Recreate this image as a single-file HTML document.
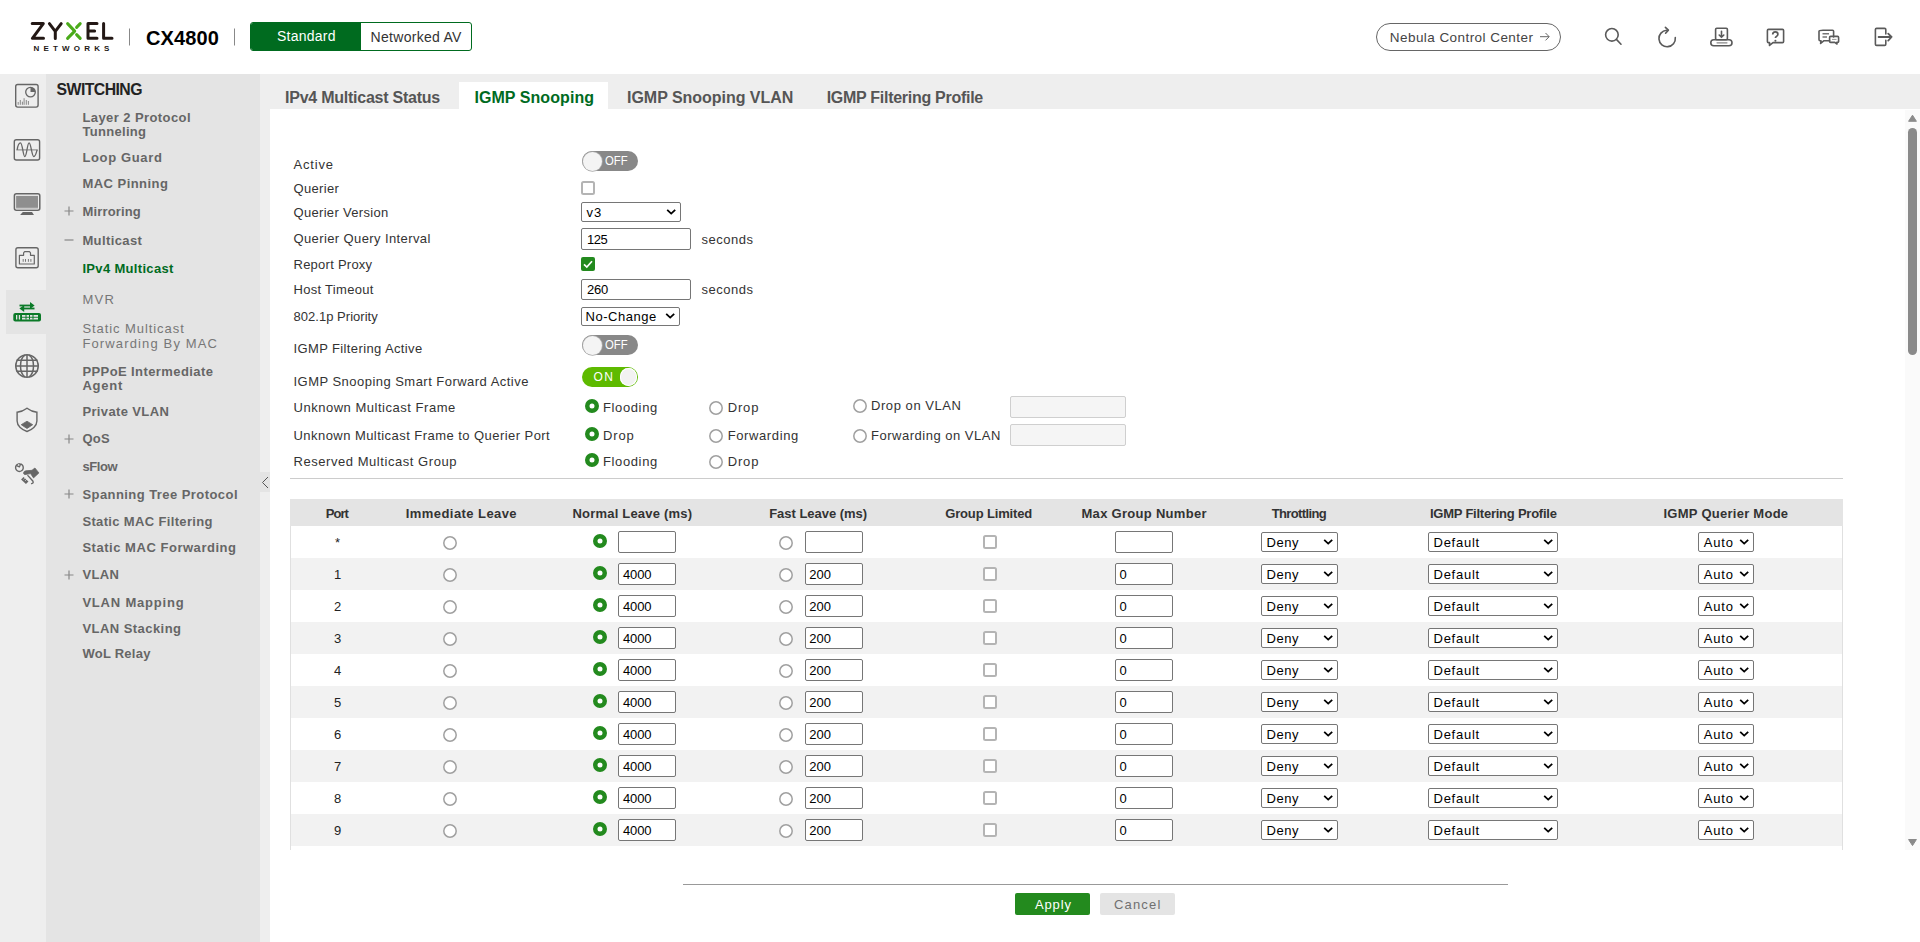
<!DOCTYPE html>
<html><head><meta charset="utf-8"><title>IGMP Snooping</title>
<style>
html,body{margin:0;padding:0}
body{width:1920px;height:942px;overflow:hidden;position:relative;background:#fff;font-family:"Liberation Sans", sans-serif}
.t{position:absolute;white-space:nowrap;line-height:1}
</style></head><body>
<div style="position:absolute;left:0px;top:74px;width:46px;height:868px;background:#eeeeee"></div>
<div style="position:absolute;left:46px;top:74px;width:214px;height:868px;background:#e4e4e4"></div>
<div style="position:absolute;left:260px;top:74px;width:1660px;height:868px;background:#eeeeee"></div>
<div style="position:absolute;left:270px;top:109px;width:1650px;height:833px;background:#ffffff"></div>
<div style="position:absolute;left:6px;top:290px;width:40px;height:44px;background:#e4e4e4"></div>
<div style="position:absolute;left:260px;top:472px;width:10px;height:20px;background:#e4e4e4"></div>
<svg style="position:absolute;left:260px;top:472px" width="10" height="20"><path d="M8 5 L2.5 10.5 L8 16" fill="none" stroke="#555" stroke-width="1"/></svg>
<svg style="position:absolute;left:0;top:0" width="240" height="60">
<g fill="none" stroke="#231815" stroke-width="3" stroke-linecap="round" stroke-linejoin="round">
<path d="M32.2 23.6 H43.3 L32.4 38.3 H43.5"/>
<path d="M49.4 23.6 L55.3 31.4 L61.2 23.6 M55.3 31.4 V38.4"/>
<path d="M88 23.6 H97 M88 31.1 H94.6 M88 38.3 H97 M88 23.6 V38.3"/>
<path d="M103.6 23.6 V38.3 H112"/>
</g>
<g fill="none" stroke="#4aab1a" stroke-width="3" stroke-linecap="round" stroke-linejoin="round">
<path d="M67.6 23.6 L74.7 31.1 L67.6 38.4"/>
<path d="M80.2 23.6 L76.6 27.4 M76.6 34.6 L80.2 38.4"/>
</g>
<line x1="129.5" y1="28.5" x2="129.5" y2="45.5" stroke="#888" stroke-width="1"/>
<line x1="234.5" y1="28.5" x2="234.5" y2="45.5" stroke="#888" stroke-width="1"/>
</svg>
<div class="t" style="left:33.6px;top:44.93px;font-size:8px;color:#231815;font-weight:700;letter-spacing:4.17px;">NETWORKS</div>
<div class="t" style="left:146px;top:28.07px;font-size:20px;color:#000;font-weight:700;letter-spacing:0.13px;">CX4800</div>
<div style="position:absolute;left:250px;top:22px;width:220px;height:27px;border:1px solid #006b1f;border-radius:3px;background:#fff;overflow:hidden"><div style="position:absolute;left:0;top:0;width:110px;height:27px;background:#006b1f"></div></div>
<div class="t" style="left:277px;top:29.15px;font-size:14px;color:#fff;letter-spacing:0.24px;">Standard</div>
<div class="t" style="left:370.6px;top:29.65px;font-size:14px;color:#333;letter-spacing:0.29px;">Networked AV</div>
<div style="position:absolute;left:1376px;top:23px;width:183px;height:26px;border:1px solid #666;border-radius:14px"></div>
<div class="t" style="left:1389.8px;top:30.57px;font-size:13.5px;color:#444;letter-spacing:0.44px;">Nebula Control Center</div>
<svg style="position:absolute;left:1536px;top:28px" width="16" height="16"><path d="M4 8.7 H13 M9.5 5 L13.2 8.7 L9.5 12.4" fill="none" stroke="#666" stroke-width="1"/></svg>
<svg style="position:absolute;left:1590px;top:15px" width="320" height="40">
<g fill="none" stroke="#5a5a5a" stroke-width="1.6" stroke-linecap="round" stroke-linejoin="round">
<circle cx="21.9" cy="19.8" r="6.3"/>
<path d="M26.4 24.4 L31 29.2"/>
<path d="M85.3 22.6 A8.2 8.2 0 1 1 76.6 15.3"/>
<path d="M75.4 12.4 L78.4 15.1 L75.6 18.2"/>
<rect x="125.6" y="13.3" width="11.8" height="11.5" rx="1.2"/>
<path d="M131.5 16.3 V22.2 M129.2 20 L131.5 22.3 L133.8 20"/>
<rect x="120.8" y="24.8" width="21.2" height="6" rx="3"/>
<path d="M127 27.8 H137" stroke-width="1.2" stroke="#888"/>
<path d="M178.5 14.4 H192.5 Q193.6 14.4 193.6 15.5 V26.5 Q193.6 27.6 192.5 27.6 H183 L179.5 30.4 V27.6 H178.5 Q177.4 27.6 177.4 26.5 V15.5 Q177.4 14.4 178.5 14.4 Z"/>
<path d="M233 15.2 H242.6 Q243.6 15.2 243.6 16.2 V22 M233 15.2 Q229 15.2 229 16.3 V24.6 Q229 25.7 230 25.7 H231 L230.6 28.5 L234 25.7 H239.6"/>
<path d="M240.6 21.4 H247.6 Q248.6 21.4 248.6 22.4 V26.4 Q248.6 27.4 247.6 27.4 H246.8 L247 29 L244.8 27.4 H240.6 Q239.6 27.4 239.6 26.4 V22.4 Q239.6 21.4 240.6 21.4 Z"/>
<path d="M295.8 19 V14.6 Q295.8 13.4 294.6 13.4 H286.6 Q285.4 13.4 285.4 14.6 V29.2 Q285.4 30.4 286.6 30.4 H294.6 Q295.8 30.4 295.8 29.2 V25.2"/>
<path d="M288.6 22 H301.4 M298.2 18.6 L301.6 22 L298.2 25.6" stroke-width="1.8"/>
</g>
<path d="M182.7 19.6 C182.7 17.8 184 16.9 185.3 16.9 C186.8 16.9 187.9 17.9 187.9 19.3 C187.9 21.2 185.4 21.4 185.4 22.9" fill="none" stroke="#5a5a5a" stroke-width="1.7"/><circle cx="185.4" cy="25.7" r="1.05" fill="#5a5a5a"/>
<path d="M232.5 18.8 H239 M232.5 22 H237" stroke="#777" stroke-width="1.4"/>
<path d="M242 24.4 H246.5" stroke="#999" stroke-width="1"/>
</svg>
<svg style="position:absolute;left:0;top:74px" width="46" height="220">
<g fill="none" stroke="#666" stroke-width="1.4" stroke-linejoin="round">
<rect x="15.7" y="10.5" width="22.4" height="22.6" rx="2"/>
<circle cx="30.5" cy="18.1" r="4.8" stroke-width="1.3"/>
<rect x="14.3" y="65.8" width="25.3" height="20.2" rx="2"/>
<rect x="14.4" y="119.8" width="25.4" height="16.5" rx="2" stroke-width="1.5"/>
<rect x="15.9" y="173.8" width="22.3" height="19.9" rx="2"/>
<path d="M19.4 190 V181.3 H23.6 V178.9 L24.6 177.7 H29.5 L30.5 178.9 V181.3 H34.3 V190 Z" stroke-width="1.2"/>
</g>
<path d="M30.5 13.3 A4.8 4.8 0 0 1 35.3 18.1 H30.5 Z" fill="#666"/>
<g stroke="#888" stroke-width="1">
<path d="M18.2 30.8 V28 M20.3 30.8 V26 M22.4 30.8 V27.7 M24.1 30.8 V24.2 M26.3 30.8 V26 M28.4 30.8 V27"/>
</g>
<path d="M16.3 75.9 H37.8" stroke="#888" stroke-width="1.1"/>
<path d="M17.2 75.9 C17.8 71 19 68.8 20.5 68.8 C22.5 68.8 23 82.6 24.8 82.6 C26.8 82.6 27.2 68.8 29.1 68.8 C31 68.8 31.8 82.6 33.8 82.6 C35.6 82.6 36.5 78 37.1 75.9" fill="none" stroke="#666" stroke-width="1.3"/>
<rect x="16.1" y="121.9" width="21.9" height="12" fill="#8e8e8e"/>
<rect x="16.1" y="133.9" width="21.9" height="1.6" fill="#c8c8c8"/>
<path d="M22.8 138 H32 L34 140.9 H20.1 Z" fill="#666"/>
<path d="M23.2 185 V187.8 M25.5 185 V187.8 M28.4 185 V187.8 M30.9 185 V187.8" stroke="#777" stroke-width="1"/>
</svg>
<svg style="position:absolute;left:0;top:290px" width="46" height="44">
<g fill="#0b7a28">
<rect x="19.5" y="14.6" width="11" height="1.8"/>
<path d="M30 11.9 L34.6 15.5 L30 19.1 Z"/>
<rect x="24" y="17.6" width="10.5" height="1.8"/>
<path d="M24.2 15 L19.4 18.5 L24.2 22 Z"/>
<rect x="13.3" y="23" width="27.7" height="8.4" rx="2"/>
</g>
<g fill="#e4e4e4">
<rect x="16" y="25" width="1.3" height="4.5"/>
<rect x="18.8" y="25" width="1.3" height="4.5"/>
<rect x="22" y="25" width="16" height="4.5"/>
</g>
<g fill="#0b7a28">
<rect x="25.5" y="25" width="1" height="4.5"/><rect x="29" y="25" width="1" height="4.5"/><rect x="32.5" y="25" width="1" height="4.5"/>
<rect x="22" y="26.8" width="16" height="0.9"/>
</g>
</svg>
<svg style="position:absolute;left:0;top:340px" width="46" height="160">
<g fill="none" stroke="#666" stroke-width="1.5">
<circle cx="27" cy="26" r="11.25"/>
<path d="M16.5 20.2 H37.5 M15.8 25.9 H38.2 M16.5 31.2 H37.5 M27 15 V37"/>
<path d="M25 15.2 C19 19 19 33 25 36.8 M29 15.2 C35 19 35 33 29 36.8"/>
<path d="M27 68.2 C30 70.5 33.5 71.8 36.9 72.2 V81 C36.9 86 32 90 27 91.5 C22 90 17.1 86 17.1 81 V72.2 C20.5 71.8 24 70.5 27 68.2 Z" stroke-width="1.4"/>
</g>
<path d="M21.2 84.7 L27 81.2 L32.7 84.7 L27 88.5 Z" fill="#666" stroke="#666" stroke-width="0.8" stroke-linejoin="round"/>
<g fill="#666" stroke="#666" stroke-linejoin="round" stroke-width="0.8">
<path d="M23.6 132.6 Q24 131 26 130.8 L32 130.3 L34.9 128 L38.9 132.9 L33.5 137.9 L30.6 133.6 L25 134.6 Q23.4 134.4 23.6 132.6 Z"/>
</g>
<path d="M22.3 138.2 L27.2 142.8" stroke="#666" stroke-width="3.6"/>
<path d="M23.5 139.6 L25.5 137.6 M25 141 L27 139" stroke="#eee" stroke-width="0.6"/>
<g fill="none" stroke="#666" stroke-width="1.4" stroke-linecap="round">
<path d="M17.4 124.3 A3.85 3.85 0 1 0 22.6 125.4"/><path d="M16.6 125.6 L19.4 126.9 L20.4 124.4 L18.8 123.6" stroke-width="1.3" stroke-linejoin="round"/><path d="M21 123.9 L22.5 125.3" stroke-width="1.3"/>
<path d="M27.9 135.6 L32.8 141 Q34 143.3 31.6 143.6"/>
</g>
</svg>
<div class="t" style="left:56.6px;top:81.63px;font-size:15.8px;color:#222;font-weight:700;letter-spacing:-0.56px;">SWITCHING</div>
<div class="t" style="left:82.4px;top:111px;font-size:13px;color:#666;font-weight:700;letter-spacing:0.42px;">Layer 2 Protocol</div>
<div class="t" style="left:82.4px;top:125px;font-size:13px;color:#666;font-weight:700;letter-spacing:0.31px;">Tunneling</div>
<div class="t" style="left:82.4px;top:151px;font-size:13px;color:#666;font-weight:700;letter-spacing:0.65px;">Loop Guard</div>
<div class="t" style="left:82.4px;top:177px;font-size:13px;color:#666;font-weight:700;letter-spacing:0.47px;">MAC Pinning</div>
<div class="t" style="left:82.4px;top:205.2px;font-size:13px;color:#666;font-weight:700;letter-spacing:0.17px;">Mirroring</div>
<div class="t" style="left:82.4px;top:233.7px;font-size:13px;color:#666;font-weight:700;letter-spacing:0.4px;">Multicast</div>
<div class="t" style="left:82.4px;top:262.4px;font-size:13px;color:#006b1f;font-weight:700;letter-spacing:0.33px;">IPv4 Multicast</div>
<div class="t" style="left:82.4px;top:292.7px;font-size:13px;color:#777;letter-spacing:1.35px;">MVR</div>
<div class="t" style="left:82.4px;top:322.4px;font-size:13px;color:#777;letter-spacing:0.93px;">Static Multicast</div>
<div class="t" style="left:82.4px;top:336.5px;font-size:13px;color:#777;letter-spacing:1.14px;">Forwarding By MAC</div>
<div class="t" style="left:82.4px;top:364.7px;font-size:13px;color:#666;font-weight:700;letter-spacing:0.41px;">PPPoE Intermediate</div>
<div class="t" style="left:82.4px;top:378.8px;font-size:13px;color:#666;font-weight:700;letter-spacing:0.8px;">Agent</div>
<div class="t" style="left:82.4px;top:404.6px;font-size:13px;color:#666;font-weight:700;letter-spacing:0.37px;">Private VLAN</div>
<div class="t" style="left:82.4px;top:432.3px;font-size:13px;color:#666;font-weight:700;letter-spacing:0.22px;">QoS</div>
<div class="t" style="left:82.4px;top:460px;font-size:13px;color:#666;font-weight:700;letter-spacing:-0.43px;">sFlow</div>
<div class="t" style="left:82.4px;top:487.5px;font-size:13px;color:#666;font-weight:700;letter-spacing:0.44px;">Spanning Tree Protocol</div>
<div class="t" style="left:82.4px;top:515px;font-size:13px;color:#666;font-weight:700;letter-spacing:0.35px;">Static MAC Filtering</div>
<div class="t" style="left:82.4px;top:540.7px;font-size:13px;color:#666;font-weight:700;letter-spacing:0.53px;">Static MAC Forwarding</div>
<div class="t" style="left:82.4px;top:568.4px;font-size:13px;color:#666;font-weight:700;letter-spacing:0.33px;">VLAN</div>
<div class="t" style="left:82.4px;top:596px;font-size:13px;color:#666;font-weight:700;letter-spacing:0.8px;">VLAN Mapping</div>
<div class="t" style="left:82.4px;top:621.7px;font-size:13px;color:#666;font-weight:700;letter-spacing:0.45px;">VLAN Stacking</div>
<div class="t" style="left:82.4px;top:647.3px;font-size:13px;color:#666;font-weight:700;letter-spacing:0.26px;">WoL Relay</div>
<svg style="position:absolute;left:60px;top:200px" width="20" height="400">
<g stroke="#888" stroke-width="1.2">
<path d="M4.5 11 H13.5 M9 6.5 V15.5"/>
<path d="M4.5 40 H13.5"/>
<path d="M4.5 239 H13.5 M9 234.5 V243.5"/>
<path d="M4.5 294 H13.5 M9 289.5 V298.5"/>
<path d="M4.5 375 H13.5 M9 370.5 V379.5"/>
</g></svg>
<div style="position:absolute;left:459px;top:82px;width:149px;height:28px;background:#fff"></div>
<div class="t" style="left:285px;top:90.16px;font-size:16px;color:#555;font-weight:700;letter-spacing:-0.24px;">IPv4 Multicast Status</div>
<div class="t" style="left:474.4px;top:90.16px;font-size:16px;color:#006b1f;font-weight:700;letter-spacing:0.07px;">IGMP Snooping</div>
<div class="t" style="left:627px;top:90.16px;font-size:16px;color:#555;font-weight:700;letter-spacing:-0.03px;">IGMP Snooping VLAN</div>
<div class="t" style="left:826.7px;top:90.16px;font-size:16px;color:#555;font-weight:700;letter-spacing:-0.28px;">IGMP Filtering Profile</div>
<div style="position:absolute;left:1905px;top:110px;width:15px;height:740px;background:#fafafa"></div>
<div style="position:absolute;left:1908px;top:128px;width:9px;height:227px;background:#8a8a8a;border-radius:4.5px"></div>
<svg style="position:absolute;left:1905px;top:110px" width="15" height="740"><path d="M3.6 11.3 L7.5 5.2 L11.4 11.3 Z" fill="#8a8a8a" stroke="#8a8a8a" stroke-width="1" stroke-linejoin="round"/><path d="M3.6 729.5 L7.5 735.6 L11.4 729.5 Z" fill="#8a8a8a" stroke="#8a8a8a" stroke-width="1" stroke-linejoin="round"/></svg>
<div class="t" style="left:293.5px;top:157.6px;font-size:13px;color:#333;letter-spacing:0.83px;">Active</div>
<div class="t" style="left:293.5px;top:181.8px;font-size:13px;color:#333;letter-spacing:0.33px;">Querier</div>
<div class="t" style="left:293.5px;top:205.5px;font-size:13px;color:#333;letter-spacing:0.31px;">Querier Version</div>
<div class="t" style="left:293.5px;top:232.3px;font-size:13px;color:#333;letter-spacing:0.39px;">Querier Query Interval</div>
<div class="t" style="left:293.5px;top:258.1px;font-size:13px;color:#333;letter-spacing:0.25px;">Report Proxy</div>
<div class="t" style="left:293.5px;top:283.2px;font-size:13px;color:#333;letter-spacing:0.3px;">Host Timeout</div>
<div class="t" style="left:293.5px;top:310.2px;font-size:13px;color:#333;letter-spacing:0.03px;">802.1p Priority</div>
<div class="t" style="left:293.5px;top:342.2px;font-size:13px;color:#333;letter-spacing:0.38px;">IGMP Filtering Active</div>
<div class="t" style="left:293.5px;top:374.5px;font-size:13px;color:#333;letter-spacing:0.47px;">IGMP Snooping Smart Forward Active</div>
<div class="t" style="left:293.5px;top:401px;font-size:13px;color:#333;letter-spacing:0.52px;">Unknown Multicast Frame</div>
<div class="t" style="left:293.5px;top:428.9px;font-size:13px;color:#333;letter-spacing:0.45px;">Unknown Multicast Frame to Querier Port</div>
<div class="t" style="left:293.5px;top:455.2px;font-size:13px;color:#333;letter-spacing:0.55px;">Reserved Multicast Group</div>
<div style="position:absolute;left:582px;top:151px;width:56px;height:20px;border-radius:10px;background:#888"></div>
<div style="position:absolute;left:582.5px;top:151.5px;width:19px;height:19px;border-radius:50%;background:#f4f4f4;box-shadow:0 0 0 0.8px #aaa"></div>
<div class="t" style="left:605.3px;top:153.8px;font-size:13px;color:#fff;transform:scaleX(0.87);transform-origin:0 0;">OFF</div>
<div style="position:absolute;left:582px;top:335px;width:56px;height:20px;border-radius:10px;background:#888"></div>
<div style="position:absolute;left:582.5px;top:335.5px;width:19px;height:19px;border-radius:50%;background:#f4f4f4;box-shadow:0 0 0 0.8px #aaa"></div>
<div class="t" style="left:605.3px;top:337.8px;font-size:13px;color:#fff;transform:scaleX(0.87);transform-origin:0 0;">OFF</div>
<div style="position:absolute;left:582px;top:367px;width:56px;height:20px;border-radius:10px;background:#5eba00"></div>
<div style="position:absolute;left:619.5px;top:368.25px;width:17.5px;height:17.5px;border-radius:50%;background:#f2f2f2;box-shadow:inset 0 0 0 1px #fff"></div>
<div class="t" style="left:593.6px;top:370.54px;font-size:12px;color:#fff;letter-spacing:1.27px;">ON</div>
<div style="position:absolute;left:581px;top:181px;width:10px;height:10px;border-radius:2.5px;background:#fff;border:2px solid #b4b4b4"></div>
<div style="position:absolute;left:581px;top:257px;width:14px;height:14px;border-radius:2px;background:#238a1e"></div>
<svg style="position:absolute;left:581px;top:257px" width="14" height="14"><path d="M3 7.4 L5.8 10 L11 4.2" fill="none" stroke="#fff" stroke-width="1.7"/></svg>
<div style="position:absolute;left:581px;top:202px;width:98px;height:18px;border:1px solid #767676;border-radius:2px;background:#fff"></div>
<svg style="position:absolute;left:666px;top:208.0px" width="11" height="8"><path d="M1.2 1.8 L5.2 5.6 L9.2 1.8" fill="none" stroke="#000" stroke-width="1.8"/></svg>
<div class="t" style="left:586.4px;top:205.8px;font-size:13px;color:#000;letter-spacing:1px;">v3</div>
<div style="position:absolute;left:581px;top:228px;width:108px;height:20px;border:1px solid #767676;border-radius:2px;background:#fff"></div>
<div class="t" style="left:586.9px;top:232.8px;font-size:13px;color:#000;letter-spacing:-0.48px;">125</div>
<div class="t" style="left:701.6px;top:232.8px;font-size:13px;color:#333;letter-spacing:0.51px;">seconds</div>
<div style="position:absolute;left:581px;top:278.5px;width:108px;height:19.5px;border:1px solid #767676;border-radius:2px;background:#fff"></div>
<div class="t" style="left:586.9px;top:283px;font-size:13px;color:#000;letter-spacing:-0.23px;">260</div>
<div class="t" style="left:701.6px;top:283px;font-size:13px;color:#333;letter-spacing:0.51px;">seconds</div>
<div style="position:absolute;left:581px;top:306.5px;width:97px;height:17.5px;border:1px solid #767676;border-radius:2px;background:#fff"></div>
<svg style="position:absolute;left:665px;top:312.25px" width="11" height="8"><path d="M1.2 1.8 L5.2 5.6 L9.2 1.8" fill="none" stroke="#000" stroke-width="1.8"/></svg>
<div class="t" style="left:585.5px;top:310px;font-size:13px;color:#000;letter-spacing:0.53px;">No-Change</div>
<svg style="position:absolute;left:584px;top:398px" width="16" height="16"><circle cx="8" cy="8" r="4.75" fill="#fff" stroke="#238a1e" stroke-width="4.5"/></svg>
<div class="t" style="left:603px;top:401px;font-size:13px;color:#333;letter-spacing:0.62px;">Flooding</div>
<svg style="position:absolute;left:707.7px;top:400px" width="16" height="16"><circle cx="8" cy="8" r="6.2" fill="#fff" stroke="#a0a0a0" stroke-width="1.5"/></svg>
<div class="t" style="left:727.7px;top:401px;font-size:13px;color:#333;letter-spacing:0.85px;">Drop</div>
<svg style="position:absolute;left:852px;top:397.6px" width="16" height="16"><circle cx="8" cy="8" r="6.2" fill="#fff" stroke="#a0a0a0" stroke-width="1.5"/></svg>
<div class="t" style="left:871px;top:399.3px;font-size:13px;color:#333;letter-spacing:0.56px;">Drop on VLAN</div>
<div style="position:absolute;left:1010px;top:396px;width:114px;height:20px;border:1px solid #cfcfcf;border-radius:2px;background:#f5f5f5"></div>
<svg style="position:absolute;left:584px;top:426px" width="16" height="16"><circle cx="8" cy="8" r="4.75" fill="#fff" stroke="#238a1e" stroke-width="4.5"/></svg>
<div class="t" style="left:603px;top:429.3px;font-size:13px;color:#333;letter-spacing:0.85px;">Drop</div>
<svg style="position:absolute;left:707.7px;top:428px" width="16" height="16"><circle cx="8" cy="8" r="6.2" fill="#fff" stroke="#a0a0a0" stroke-width="1.5"/></svg>
<div class="t" style="left:727.7px;top:429.3px;font-size:13px;color:#333;letter-spacing:0.61px;">Forwarding</div>
<svg style="position:absolute;left:852px;top:427.6px" width="16" height="16"><circle cx="8" cy="8" r="6.2" fill="#fff" stroke="#a0a0a0" stroke-width="1.5"/></svg>
<div class="t" style="left:871px;top:429.3px;font-size:13px;color:#333;letter-spacing:0.51px;">Forwarding on VLAN</div>
<div style="position:absolute;left:1010px;top:424px;width:114px;height:20px;border:1px solid #cfcfcf;border-radius:2px;background:#f5f5f5"></div>
<svg style="position:absolute;left:584px;top:452px" width="16" height="16"><circle cx="8" cy="8" r="4.75" fill="#fff" stroke="#238a1e" stroke-width="4.5"/></svg>
<div class="t" style="left:603px;top:455.1px;font-size:13px;color:#333;letter-spacing:0.62px;">Flooding</div>
<svg style="position:absolute;left:707.7px;top:454px" width="16" height="16"><circle cx="8" cy="8" r="6.2" fill="#fff" stroke="#a0a0a0" stroke-width="1.5"/></svg>
<div class="t" style="left:727.7px;top:455.1px;font-size:13px;color:#333;letter-spacing:0.85px;">Drop</div>
<div style="position:absolute;left:290px;top:478px;width:1553px;height:1px;background:#cccccc"></div>
<div style="position:absolute;left:290px;top:499px;width:1553px;height:27px;background:#e4e4e4"></div>
<div style="position:absolute;left:290px;top:526px;width:1px;height:324px;background:#e0e0e0"></div>
<div style="position:absolute;left:1842px;top:526px;width:1px;height:324px;background:#e0e0e0"></div>
<div class="t" style="left:325.8px;top:507px;font-size:13px;color:#333;font-weight:700;letter-spacing:-0.99px;">Port</div>
<div class="t" style="left:405.8px;top:507px;font-size:13px;color:#333;font-weight:700;letter-spacing:0.43px;">Immediate Leave</div>
<div class="t" style="left:572.5px;top:507px;font-size:13px;color:#333;font-weight:700;letter-spacing:0.2px;">Normal Leave (ms)</div>
<div class="t" style="left:769.2px;top:507px;font-size:13px;color:#333;font-weight:700;letter-spacing:-0.03px;">Fast Leave (ms)</div>
<div class="t" style="left:945.2px;top:507px;font-size:13px;color:#333;font-weight:700;letter-spacing:-0.15px;">Group Limited</div>
<div class="t" style="left:1081.5px;top:507px;font-size:13px;color:#333;font-weight:700;letter-spacing:0.29px;">Max Group Number</div>
<div class="t" style="left:1271.7px;top:507px;font-size:13px;color:#333;font-weight:700;letter-spacing:-0.63px;">Throttling</div>
<div class="t" style="left:1430px;top:507px;font-size:13px;color:#333;font-weight:700;letter-spacing:-0.24px;">IGMP Filtering Profile</div>
<div class="t" style="left:1663.5px;top:507px;font-size:13px;color:#333;font-weight:700;letter-spacing:0.26px;">IGMP Querier Mode</div>
<div class="t" style="left:287.5px;width:100px;text-align:center;top:536px;font-size:13px;color:#222;">*</div>
<svg style="position:absolute;left:442px;top:535px" width="16" height="16"><circle cx="8" cy="8" r="6.2" fill="#fff" stroke="#a0a0a0" stroke-width="1.5"/></svg>
<svg style="position:absolute;left:592px;top:532.8px" width="16" height="16"><circle cx="8" cy="8" r="4.75" fill="#fff" stroke="#238a1e" stroke-width="4.5"/></svg>
<div style="position:absolute;left:618px;top:531px;width:56px;height:20px;border:1px solid #767676;border-radius:2px;background:#fff"></div>
<svg style="position:absolute;left:777.8px;top:535px" width="16" height="16"><circle cx="8" cy="8" r="6.2" fill="#fff" stroke="#a0a0a0" stroke-width="1.5"/></svg>
<div style="position:absolute;left:805px;top:531px;width:56px;height:20px;border:1px solid #767676;border-radius:2px;background:#fff"></div>
<div style="position:absolute;left:983px;top:535px;width:10px;height:10px;border-radius:2.5px;background:#fff;border:2px solid #b4b4b4"></div>
<div style="position:absolute;left:1115px;top:531px;width:56px;height:20px;border:1px solid #767676;border-radius:2px;background:#fff"></div>
<div style="position:absolute;left:1261px;top:532px;width:75px;height:18px;border:1px solid #767676;border-radius:2px;background:#fff"></div>
<svg style="position:absolute;left:1323px;top:538.0px" width="11" height="8"><path d="M1.2 1.8 L5.2 5.6 L9.2 1.8" fill="none" stroke="#000" stroke-width="1.8"/></svg>
<div style="position:absolute;left:1428px;top:532px;width:128px;height:18px;border:1px solid #767676;border-radius:2px;background:#fff"></div>
<svg style="position:absolute;left:1543px;top:538.0px" width="11" height="8"><path d="M1.2 1.8 L5.2 5.6 L9.2 1.8" fill="none" stroke="#000" stroke-width="1.8"/></svg>
<div style="position:absolute;left:1698px;top:532px;width:54px;height:18px;border:1px solid #767676;border-radius:2px;background:#fff"></div>
<svg style="position:absolute;left:1739px;top:538.0px" width="11" height="8"><path d="M1.2 1.8 L5.2 5.6 L9.2 1.8" fill="none" stroke="#000" stroke-width="1.8"/></svg>
<div class="t" style="left:1266.5px;top:535.7px;font-size:13px;color:#000;letter-spacing:0.55px;">Deny</div>
<div class="t" style="left:1433.5px;top:535.7px;font-size:13px;color:#000;letter-spacing:0.74px;">Default</div>
<div class="t" style="left:1703.8px;top:535.7px;font-size:13px;color:#000;letter-spacing:0.83px;">Auto</div>
<div style="position:absolute;left:291px;top:558px;width:1551px;height:32px;background:#f2f2f2"></div>
<div class="t" style="left:287.5px;width:100px;text-align:center;top:568px;font-size:13px;color:#222;">1</div>
<svg style="position:absolute;left:442px;top:567px" width="16" height="16"><circle cx="8" cy="8" r="6.2" fill="#fff" stroke="#a0a0a0" stroke-width="1.5"/></svg>
<svg style="position:absolute;left:592px;top:564.8px" width="16" height="16"><circle cx="8" cy="8" r="4.75" fill="#fff" stroke="#238a1e" stroke-width="4.5"/></svg>
<div style="position:absolute;left:618px;top:563px;width:56px;height:20px;border:1px solid #767676;border-radius:2px;background:#fff"></div>
<svg style="position:absolute;left:777.8px;top:567px" width="16" height="16"><circle cx="8" cy="8" r="6.2" fill="#fff" stroke="#a0a0a0" stroke-width="1.5"/></svg>
<div style="position:absolute;left:805px;top:563px;width:56px;height:20px;border:1px solid #767676;border-radius:2px;background:#fff"></div>
<div style="position:absolute;left:983px;top:567px;width:10px;height:10px;border-radius:2.5px;background:#fff;border:2px solid #b4b4b4"></div>
<div style="position:absolute;left:1115px;top:563px;width:56px;height:20px;border:1px solid #767676;border-radius:2px;background:#fff"></div>
<div style="position:absolute;left:1261px;top:564px;width:75px;height:18px;border:1px solid #767676;border-radius:2px;background:#fff"></div>
<svg style="position:absolute;left:1323px;top:570.0px" width="11" height="8"><path d="M1.2 1.8 L5.2 5.6 L9.2 1.8" fill="none" stroke="#000" stroke-width="1.8"/></svg>
<div style="position:absolute;left:1428px;top:564px;width:128px;height:18px;border:1px solid #767676;border-radius:2px;background:#fff"></div>
<svg style="position:absolute;left:1543px;top:570.0px" width="11" height="8"><path d="M1.2 1.8 L5.2 5.6 L9.2 1.8" fill="none" stroke="#000" stroke-width="1.8"/></svg>
<div style="position:absolute;left:1698px;top:564px;width:54px;height:18px;border:1px solid #767676;border-radius:2px;background:#fff"></div>
<svg style="position:absolute;left:1739px;top:570.0px" width="11" height="8"><path d="M1.2 1.8 L5.2 5.6 L9.2 1.8" fill="none" stroke="#000" stroke-width="1.8"/></svg>
<div class="t" style="left:623px;top:567.7px;font-size:13px;color:#000;letter-spacing:-0.13px;">4000</div>
<div class="t" style="left:809.2px;top:567.7px;font-size:13px;color:#000;letter-spacing:0.02px;">200</div>
<div class="t" style="left:1119.4px;top:567.7px;font-size:13px;color:#000;">0</div>
<div class="t" style="left:1266.5px;top:567.7px;font-size:13px;color:#000;letter-spacing:0.55px;">Deny</div>
<div class="t" style="left:1433.5px;top:567.7px;font-size:13px;color:#000;letter-spacing:0.74px;">Default</div>
<div class="t" style="left:1703.8px;top:567.7px;font-size:13px;color:#000;letter-spacing:0.83px;">Auto</div>
<div class="t" style="left:287.5px;width:100px;text-align:center;top:600px;font-size:13px;color:#222;">2</div>
<svg style="position:absolute;left:442px;top:599px" width="16" height="16"><circle cx="8" cy="8" r="6.2" fill="#fff" stroke="#a0a0a0" stroke-width="1.5"/></svg>
<svg style="position:absolute;left:592px;top:596.8px" width="16" height="16"><circle cx="8" cy="8" r="4.75" fill="#fff" stroke="#238a1e" stroke-width="4.5"/></svg>
<div style="position:absolute;left:618px;top:595px;width:56px;height:20px;border:1px solid #767676;border-radius:2px;background:#fff"></div>
<svg style="position:absolute;left:777.8px;top:599px" width="16" height="16"><circle cx="8" cy="8" r="6.2" fill="#fff" stroke="#a0a0a0" stroke-width="1.5"/></svg>
<div style="position:absolute;left:805px;top:595px;width:56px;height:20px;border:1px solid #767676;border-radius:2px;background:#fff"></div>
<div style="position:absolute;left:983px;top:599px;width:10px;height:10px;border-radius:2.5px;background:#fff;border:2px solid #b4b4b4"></div>
<div style="position:absolute;left:1115px;top:595px;width:56px;height:20px;border:1px solid #767676;border-radius:2px;background:#fff"></div>
<div style="position:absolute;left:1261px;top:596px;width:75px;height:18px;border:1px solid #767676;border-radius:2px;background:#fff"></div>
<svg style="position:absolute;left:1323px;top:602.0px" width="11" height="8"><path d="M1.2 1.8 L5.2 5.6 L9.2 1.8" fill="none" stroke="#000" stroke-width="1.8"/></svg>
<div style="position:absolute;left:1428px;top:596px;width:128px;height:18px;border:1px solid #767676;border-radius:2px;background:#fff"></div>
<svg style="position:absolute;left:1543px;top:602.0px" width="11" height="8"><path d="M1.2 1.8 L5.2 5.6 L9.2 1.8" fill="none" stroke="#000" stroke-width="1.8"/></svg>
<div style="position:absolute;left:1698px;top:596px;width:54px;height:18px;border:1px solid #767676;border-radius:2px;background:#fff"></div>
<svg style="position:absolute;left:1739px;top:602.0px" width="11" height="8"><path d="M1.2 1.8 L5.2 5.6 L9.2 1.8" fill="none" stroke="#000" stroke-width="1.8"/></svg>
<div class="t" style="left:623px;top:599.7px;font-size:13px;color:#000;letter-spacing:-0.13px;">4000</div>
<div class="t" style="left:809.2px;top:599.7px;font-size:13px;color:#000;letter-spacing:0.02px;">200</div>
<div class="t" style="left:1119.4px;top:599.7px;font-size:13px;color:#000;">0</div>
<div class="t" style="left:1266.5px;top:599.7px;font-size:13px;color:#000;letter-spacing:0.55px;">Deny</div>
<div class="t" style="left:1433.5px;top:599.7px;font-size:13px;color:#000;letter-spacing:0.74px;">Default</div>
<div class="t" style="left:1703.8px;top:599.7px;font-size:13px;color:#000;letter-spacing:0.83px;">Auto</div>
<div style="position:absolute;left:291px;top:622px;width:1551px;height:32px;background:#f2f2f2"></div>
<div class="t" style="left:287.5px;width:100px;text-align:center;top:632px;font-size:13px;color:#222;">3</div>
<svg style="position:absolute;left:442px;top:631px" width="16" height="16"><circle cx="8" cy="8" r="6.2" fill="#fff" stroke="#a0a0a0" stroke-width="1.5"/></svg>
<svg style="position:absolute;left:592px;top:628.8px" width="16" height="16"><circle cx="8" cy="8" r="4.75" fill="#fff" stroke="#238a1e" stroke-width="4.5"/></svg>
<div style="position:absolute;left:618px;top:627px;width:56px;height:20px;border:1px solid #767676;border-radius:2px;background:#fff"></div>
<svg style="position:absolute;left:777.8px;top:631px" width="16" height="16"><circle cx="8" cy="8" r="6.2" fill="#fff" stroke="#a0a0a0" stroke-width="1.5"/></svg>
<div style="position:absolute;left:805px;top:627px;width:56px;height:20px;border:1px solid #767676;border-radius:2px;background:#fff"></div>
<div style="position:absolute;left:983px;top:631px;width:10px;height:10px;border-radius:2.5px;background:#fff;border:2px solid #b4b4b4"></div>
<div style="position:absolute;left:1115px;top:627px;width:56px;height:20px;border:1px solid #767676;border-radius:2px;background:#fff"></div>
<div style="position:absolute;left:1261px;top:628px;width:75px;height:18px;border:1px solid #767676;border-radius:2px;background:#fff"></div>
<svg style="position:absolute;left:1323px;top:634.0px" width="11" height="8"><path d="M1.2 1.8 L5.2 5.6 L9.2 1.8" fill="none" stroke="#000" stroke-width="1.8"/></svg>
<div style="position:absolute;left:1428px;top:628px;width:128px;height:18px;border:1px solid #767676;border-radius:2px;background:#fff"></div>
<svg style="position:absolute;left:1543px;top:634.0px" width="11" height="8"><path d="M1.2 1.8 L5.2 5.6 L9.2 1.8" fill="none" stroke="#000" stroke-width="1.8"/></svg>
<div style="position:absolute;left:1698px;top:628px;width:54px;height:18px;border:1px solid #767676;border-radius:2px;background:#fff"></div>
<svg style="position:absolute;left:1739px;top:634.0px" width="11" height="8"><path d="M1.2 1.8 L5.2 5.6 L9.2 1.8" fill="none" stroke="#000" stroke-width="1.8"/></svg>
<div class="t" style="left:623px;top:631.7px;font-size:13px;color:#000;letter-spacing:-0.13px;">4000</div>
<div class="t" style="left:809.2px;top:631.7px;font-size:13px;color:#000;letter-spacing:0.02px;">200</div>
<div class="t" style="left:1119.4px;top:631.7px;font-size:13px;color:#000;">0</div>
<div class="t" style="left:1266.5px;top:631.7px;font-size:13px;color:#000;letter-spacing:0.55px;">Deny</div>
<div class="t" style="left:1433.5px;top:631.7px;font-size:13px;color:#000;letter-spacing:0.74px;">Default</div>
<div class="t" style="left:1703.8px;top:631.7px;font-size:13px;color:#000;letter-spacing:0.83px;">Auto</div>
<div class="t" style="left:287.5px;width:100px;text-align:center;top:664px;font-size:13px;color:#222;">4</div>
<svg style="position:absolute;left:442px;top:663px" width="16" height="16"><circle cx="8" cy="8" r="6.2" fill="#fff" stroke="#a0a0a0" stroke-width="1.5"/></svg>
<svg style="position:absolute;left:592px;top:660.8px" width="16" height="16"><circle cx="8" cy="8" r="4.75" fill="#fff" stroke="#238a1e" stroke-width="4.5"/></svg>
<div style="position:absolute;left:618px;top:659px;width:56px;height:20px;border:1px solid #767676;border-radius:2px;background:#fff"></div>
<svg style="position:absolute;left:777.8px;top:663px" width="16" height="16"><circle cx="8" cy="8" r="6.2" fill="#fff" stroke="#a0a0a0" stroke-width="1.5"/></svg>
<div style="position:absolute;left:805px;top:659px;width:56px;height:20px;border:1px solid #767676;border-radius:2px;background:#fff"></div>
<div style="position:absolute;left:983px;top:663px;width:10px;height:10px;border-radius:2.5px;background:#fff;border:2px solid #b4b4b4"></div>
<div style="position:absolute;left:1115px;top:659px;width:56px;height:20px;border:1px solid #767676;border-radius:2px;background:#fff"></div>
<div style="position:absolute;left:1261px;top:660px;width:75px;height:18px;border:1px solid #767676;border-radius:2px;background:#fff"></div>
<svg style="position:absolute;left:1323px;top:666.0px" width="11" height="8"><path d="M1.2 1.8 L5.2 5.6 L9.2 1.8" fill="none" stroke="#000" stroke-width="1.8"/></svg>
<div style="position:absolute;left:1428px;top:660px;width:128px;height:18px;border:1px solid #767676;border-radius:2px;background:#fff"></div>
<svg style="position:absolute;left:1543px;top:666.0px" width="11" height="8"><path d="M1.2 1.8 L5.2 5.6 L9.2 1.8" fill="none" stroke="#000" stroke-width="1.8"/></svg>
<div style="position:absolute;left:1698px;top:660px;width:54px;height:18px;border:1px solid #767676;border-radius:2px;background:#fff"></div>
<svg style="position:absolute;left:1739px;top:666.0px" width="11" height="8"><path d="M1.2 1.8 L5.2 5.6 L9.2 1.8" fill="none" stroke="#000" stroke-width="1.8"/></svg>
<div class="t" style="left:623px;top:663.7px;font-size:13px;color:#000;letter-spacing:-0.13px;">4000</div>
<div class="t" style="left:809.2px;top:663.7px;font-size:13px;color:#000;letter-spacing:0.02px;">200</div>
<div class="t" style="left:1119.4px;top:663.7px;font-size:13px;color:#000;">0</div>
<div class="t" style="left:1266.5px;top:663.7px;font-size:13px;color:#000;letter-spacing:0.55px;">Deny</div>
<div class="t" style="left:1433.5px;top:663.7px;font-size:13px;color:#000;letter-spacing:0.74px;">Default</div>
<div class="t" style="left:1703.8px;top:663.7px;font-size:13px;color:#000;letter-spacing:0.83px;">Auto</div>
<div style="position:absolute;left:291px;top:686px;width:1551px;height:32px;background:#f2f2f2"></div>
<div class="t" style="left:287.5px;width:100px;text-align:center;top:696px;font-size:13px;color:#222;">5</div>
<svg style="position:absolute;left:442px;top:695px" width="16" height="16"><circle cx="8" cy="8" r="6.2" fill="#fff" stroke="#a0a0a0" stroke-width="1.5"/></svg>
<svg style="position:absolute;left:592px;top:692.8px" width="16" height="16"><circle cx="8" cy="8" r="4.75" fill="#fff" stroke="#238a1e" stroke-width="4.5"/></svg>
<div style="position:absolute;left:618px;top:691px;width:56px;height:20px;border:1px solid #767676;border-radius:2px;background:#fff"></div>
<svg style="position:absolute;left:777.8px;top:695px" width="16" height="16"><circle cx="8" cy="8" r="6.2" fill="#fff" stroke="#a0a0a0" stroke-width="1.5"/></svg>
<div style="position:absolute;left:805px;top:691px;width:56px;height:20px;border:1px solid #767676;border-radius:2px;background:#fff"></div>
<div style="position:absolute;left:983px;top:695px;width:10px;height:10px;border-radius:2.5px;background:#fff;border:2px solid #b4b4b4"></div>
<div style="position:absolute;left:1115px;top:691px;width:56px;height:20px;border:1px solid #767676;border-radius:2px;background:#fff"></div>
<div style="position:absolute;left:1261px;top:692px;width:75px;height:18px;border:1px solid #767676;border-radius:2px;background:#fff"></div>
<svg style="position:absolute;left:1323px;top:698.0px" width="11" height="8"><path d="M1.2 1.8 L5.2 5.6 L9.2 1.8" fill="none" stroke="#000" stroke-width="1.8"/></svg>
<div style="position:absolute;left:1428px;top:692px;width:128px;height:18px;border:1px solid #767676;border-radius:2px;background:#fff"></div>
<svg style="position:absolute;left:1543px;top:698.0px" width="11" height="8"><path d="M1.2 1.8 L5.2 5.6 L9.2 1.8" fill="none" stroke="#000" stroke-width="1.8"/></svg>
<div style="position:absolute;left:1698px;top:692px;width:54px;height:18px;border:1px solid #767676;border-radius:2px;background:#fff"></div>
<svg style="position:absolute;left:1739px;top:698.0px" width="11" height="8"><path d="M1.2 1.8 L5.2 5.6 L9.2 1.8" fill="none" stroke="#000" stroke-width="1.8"/></svg>
<div class="t" style="left:623px;top:695.7px;font-size:13px;color:#000;letter-spacing:-0.13px;">4000</div>
<div class="t" style="left:809.2px;top:695.7px;font-size:13px;color:#000;letter-spacing:0.02px;">200</div>
<div class="t" style="left:1119.4px;top:695.7px;font-size:13px;color:#000;">0</div>
<div class="t" style="left:1266.5px;top:695.7px;font-size:13px;color:#000;letter-spacing:0.55px;">Deny</div>
<div class="t" style="left:1433.5px;top:695.7px;font-size:13px;color:#000;letter-spacing:0.74px;">Default</div>
<div class="t" style="left:1703.8px;top:695.7px;font-size:13px;color:#000;letter-spacing:0.83px;">Auto</div>
<div class="t" style="left:287.5px;width:100px;text-align:center;top:728px;font-size:13px;color:#222;">6</div>
<svg style="position:absolute;left:442px;top:727px" width="16" height="16"><circle cx="8" cy="8" r="6.2" fill="#fff" stroke="#a0a0a0" stroke-width="1.5"/></svg>
<svg style="position:absolute;left:592px;top:724.8px" width="16" height="16"><circle cx="8" cy="8" r="4.75" fill="#fff" stroke="#238a1e" stroke-width="4.5"/></svg>
<div style="position:absolute;left:618px;top:723px;width:56px;height:20px;border:1px solid #767676;border-radius:2px;background:#fff"></div>
<svg style="position:absolute;left:777.8px;top:727px" width="16" height="16"><circle cx="8" cy="8" r="6.2" fill="#fff" stroke="#a0a0a0" stroke-width="1.5"/></svg>
<div style="position:absolute;left:805px;top:723px;width:56px;height:20px;border:1px solid #767676;border-radius:2px;background:#fff"></div>
<div style="position:absolute;left:983px;top:727px;width:10px;height:10px;border-radius:2.5px;background:#fff;border:2px solid #b4b4b4"></div>
<div style="position:absolute;left:1115px;top:723px;width:56px;height:20px;border:1px solid #767676;border-radius:2px;background:#fff"></div>
<div style="position:absolute;left:1261px;top:724px;width:75px;height:18px;border:1px solid #767676;border-radius:2px;background:#fff"></div>
<svg style="position:absolute;left:1323px;top:730.0px" width="11" height="8"><path d="M1.2 1.8 L5.2 5.6 L9.2 1.8" fill="none" stroke="#000" stroke-width="1.8"/></svg>
<div style="position:absolute;left:1428px;top:724px;width:128px;height:18px;border:1px solid #767676;border-radius:2px;background:#fff"></div>
<svg style="position:absolute;left:1543px;top:730.0px" width="11" height="8"><path d="M1.2 1.8 L5.2 5.6 L9.2 1.8" fill="none" stroke="#000" stroke-width="1.8"/></svg>
<div style="position:absolute;left:1698px;top:724px;width:54px;height:18px;border:1px solid #767676;border-radius:2px;background:#fff"></div>
<svg style="position:absolute;left:1739px;top:730.0px" width="11" height="8"><path d="M1.2 1.8 L5.2 5.6 L9.2 1.8" fill="none" stroke="#000" stroke-width="1.8"/></svg>
<div class="t" style="left:623px;top:727.7px;font-size:13px;color:#000;letter-spacing:-0.13px;">4000</div>
<div class="t" style="left:809.2px;top:727.7px;font-size:13px;color:#000;letter-spacing:0.02px;">200</div>
<div class="t" style="left:1119.4px;top:727.7px;font-size:13px;color:#000;">0</div>
<div class="t" style="left:1266.5px;top:727.7px;font-size:13px;color:#000;letter-spacing:0.55px;">Deny</div>
<div class="t" style="left:1433.5px;top:727.7px;font-size:13px;color:#000;letter-spacing:0.74px;">Default</div>
<div class="t" style="left:1703.8px;top:727.7px;font-size:13px;color:#000;letter-spacing:0.83px;">Auto</div>
<div style="position:absolute;left:291px;top:750px;width:1551px;height:32px;background:#f2f2f2"></div>
<div class="t" style="left:287.5px;width:100px;text-align:center;top:760px;font-size:13px;color:#222;">7</div>
<svg style="position:absolute;left:442px;top:759px" width="16" height="16"><circle cx="8" cy="8" r="6.2" fill="#fff" stroke="#a0a0a0" stroke-width="1.5"/></svg>
<svg style="position:absolute;left:592px;top:756.8px" width="16" height="16"><circle cx="8" cy="8" r="4.75" fill="#fff" stroke="#238a1e" stroke-width="4.5"/></svg>
<div style="position:absolute;left:618px;top:755px;width:56px;height:20px;border:1px solid #767676;border-radius:2px;background:#fff"></div>
<svg style="position:absolute;left:777.8px;top:759px" width="16" height="16"><circle cx="8" cy="8" r="6.2" fill="#fff" stroke="#a0a0a0" stroke-width="1.5"/></svg>
<div style="position:absolute;left:805px;top:755px;width:56px;height:20px;border:1px solid #767676;border-radius:2px;background:#fff"></div>
<div style="position:absolute;left:983px;top:759px;width:10px;height:10px;border-radius:2.5px;background:#fff;border:2px solid #b4b4b4"></div>
<div style="position:absolute;left:1115px;top:755px;width:56px;height:20px;border:1px solid #767676;border-radius:2px;background:#fff"></div>
<div style="position:absolute;left:1261px;top:756px;width:75px;height:18px;border:1px solid #767676;border-radius:2px;background:#fff"></div>
<svg style="position:absolute;left:1323px;top:762.0px" width="11" height="8"><path d="M1.2 1.8 L5.2 5.6 L9.2 1.8" fill="none" stroke="#000" stroke-width="1.8"/></svg>
<div style="position:absolute;left:1428px;top:756px;width:128px;height:18px;border:1px solid #767676;border-radius:2px;background:#fff"></div>
<svg style="position:absolute;left:1543px;top:762.0px" width="11" height="8"><path d="M1.2 1.8 L5.2 5.6 L9.2 1.8" fill="none" stroke="#000" stroke-width="1.8"/></svg>
<div style="position:absolute;left:1698px;top:756px;width:54px;height:18px;border:1px solid #767676;border-radius:2px;background:#fff"></div>
<svg style="position:absolute;left:1739px;top:762.0px" width="11" height="8"><path d="M1.2 1.8 L5.2 5.6 L9.2 1.8" fill="none" stroke="#000" stroke-width="1.8"/></svg>
<div class="t" style="left:623px;top:759.7px;font-size:13px;color:#000;letter-spacing:-0.13px;">4000</div>
<div class="t" style="left:809.2px;top:759.7px;font-size:13px;color:#000;letter-spacing:0.02px;">200</div>
<div class="t" style="left:1119.4px;top:759.7px;font-size:13px;color:#000;">0</div>
<div class="t" style="left:1266.5px;top:759.7px;font-size:13px;color:#000;letter-spacing:0.55px;">Deny</div>
<div class="t" style="left:1433.5px;top:759.7px;font-size:13px;color:#000;letter-spacing:0.74px;">Default</div>
<div class="t" style="left:1703.8px;top:759.7px;font-size:13px;color:#000;letter-spacing:0.83px;">Auto</div>
<div class="t" style="left:287.5px;width:100px;text-align:center;top:792px;font-size:13px;color:#222;">8</div>
<svg style="position:absolute;left:442px;top:791px" width="16" height="16"><circle cx="8" cy="8" r="6.2" fill="#fff" stroke="#a0a0a0" stroke-width="1.5"/></svg>
<svg style="position:absolute;left:592px;top:788.8px" width="16" height="16"><circle cx="8" cy="8" r="4.75" fill="#fff" stroke="#238a1e" stroke-width="4.5"/></svg>
<div style="position:absolute;left:618px;top:787px;width:56px;height:20px;border:1px solid #767676;border-radius:2px;background:#fff"></div>
<svg style="position:absolute;left:777.8px;top:791px" width="16" height="16"><circle cx="8" cy="8" r="6.2" fill="#fff" stroke="#a0a0a0" stroke-width="1.5"/></svg>
<div style="position:absolute;left:805px;top:787px;width:56px;height:20px;border:1px solid #767676;border-radius:2px;background:#fff"></div>
<div style="position:absolute;left:983px;top:791px;width:10px;height:10px;border-radius:2.5px;background:#fff;border:2px solid #b4b4b4"></div>
<div style="position:absolute;left:1115px;top:787px;width:56px;height:20px;border:1px solid #767676;border-radius:2px;background:#fff"></div>
<div style="position:absolute;left:1261px;top:788px;width:75px;height:18px;border:1px solid #767676;border-radius:2px;background:#fff"></div>
<svg style="position:absolute;left:1323px;top:794.0px" width="11" height="8"><path d="M1.2 1.8 L5.2 5.6 L9.2 1.8" fill="none" stroke="#000" stroke-width="1.8"/></svg>
<div style="position:absolute;left:1428px;top:788px;width:128px;height:18px;border:1px solid #767676;border-radius:2px;background:#fff"></div>
<svg style="position:absolute;left:1543px;top:794.0px" width="11" height="8"><path d="M1.2 1.8 L5.2 5.6 L9.2 1.8" fill="none" stroke="#000" stroke-width="1.8"/></svg>
<div style="position:absolute;left:1698px;top:788px;width:54px;height:18px;border:1px solid #767676;border-radius:2px;background:#fff"></div>
<svg style="position:absolute;left:1739px;top:794.0px" width="11" height="8"><path d="M1.2 1.8 L5.2 5.6 L9.2 1.8" fill="none" stroke="#000" stroke-width="1.8"/></svg>
<div class="t" style="left:623px;top:791.7px;font-size:13px;color:#000;letter-spacing:-0.13px;">4000</div>
<div class="t" style="left:809.2px;top:791.7px;font-size:13px;color:#000;letter-spacing:0.02px;">200</div>
<div class="t" style="left:1119.4px;top:791.7px;font-size:13px;color:#000;">0</div>
<div class="t" style="left:1266.5px;top:791.7px;font-size:13px;color:#000;letter-spacing:0.55px;">Deny</div>
<div class="t" style="left:1433.5px;top:791.7px;font-size:13px;color:#000;letter-spacing:0.74px;">Default</div>
<div class="t" style="left:1703.8px;top:791.7px;font-size:13px;color:#000;letter-spacing:0.83px;">Auto</div>
<div style="position:absolute;left:291px;top:814px;width:1551px;height:32px;background:#f2f2f2"></div>
<div class="t" style="left:287.5px;width:100px;text-align:center;top:824px;font-size:13px;color:#222;">9</div>
<svg style="position:absolute;left:442px;top:823px" width="16" height="16"><circle cx="8" cy="8" r="6.2" fill="#fff" stroke="#a0a0a0" stroke-width="1.5"/></svg>
<svg style="position:absolute;left:592px;top:820.8px" width="16" height="16"><circle cx="8" cy="8" r="4.75" fill="#fff" stroke="#238a1e" stroke-width="4.5"/></svg>
<div style="position:absolute;left:618px;top:819px;width:56px;height:20px;border:1px solid #767676;border-radius:2px;background:#fff"></div>
<svg style="position:absolute;left:777.8px;top:823px" width="16" height="16"><circle cx="8" cy="8" r="6.2" fill="#fff" stroke="#a0a0a0" stroke-width="1.5"/></svg>
<div style="position:absolute;left:805px;top:819px;width:56px;height:20px;border:1px solid #767676;border-radius:2px;background:#fff"></div>
<div style="position:absolute;left:983px;top:823px;width:10px;height:10px;border-radius:2.5px;background:#fff;border:2px solid #b4b4b4"></div>
<div style="position:absolute;left:1115px;top:819px;width:56px;height:20px;border:1px solid #767676;border-radius:2px;background:#fff"></div>
<div style="position:absolute;left:1261px;top:820px;width:75px;height:18px;border:1px solid #767676;border-radius:2px;background:#fff"></div>
<svg style="position:absolute;left:1323px;top:826.0px" width="11" height="8"><path d="M1.2 1.8 L5.2 5.6 L9.2 1.8" fill="none" stroke="#000" stroke-width="1.8"/></svg>
<div style="position:absolute;left:1428px;top:820px;width:128px;height:18px;border:1px solid #767676;border-radius:2px;background:#fff"></div>
<svg style="position:absolute;left:1543px;top:826.0px" width="11" height="8"><path d="M1.2 1.8 L5.2 5.6 L9.2 1.8" fill="none" stroke="#000" stroke-width="1.8"/></svg>
<div style="position:absolute;left:1698px;top:820px;width:54px;height:18px;border:1px solid #767676;border-radius:2px;background:#fff"></div>
<svg style="position:absolute;left:1739px;top:826.0px" width="11" height="8"><path d="M1.2 1.8 L5.2 5.6 L9.2 1.8" fill="none" stroke="#000" stroke-width="1.8"/></svg>
<div class="t" style="left:623px;top:823.7px;font-size:13px;color:#000;letter-spacing:-0.13px;">4000</div>
<div class="t" style="left:809.2px;top:823.7px;font-size:13px;color:#000;letter-spacing:0.02px;">200</div>
<div class="t" style="left:1119.4px;top:823.7px;font-size:13px;color:#000;">0</div>
<div class="t" style="left:1266.5px;top:823.7px;font-size:13px;color:#000;letter-spacing:0.55px;">Deny</div>
<div class="t" style="left:1433.5px;top:823.7px;font-size:13px;color:#000;letter-spacing:0.74px;">Default</div>
<div class="t" style="left:1703.8px;top:823.7px;font-size:13px;color:#000;letter-spacing:0.83px;">Auto</div>
<div style="position:absolute;left:683px;top:884px;width:825px;height:1px;background:#999"></div>
<div style="position:absolute;left:1015px;top:893px;width:75px;height:22px;background:#238a1e;border-radius:2px"></div>
<div class="t" style="left:1034.9px;top:898.1px;font-size:13px;color:#fff;letter-spacing:0.87px;">Apply</div>
<div style="position:absolute;left:1100px;top:893px;width:75px;height:22px;background:#e4e4e4;border-radius:2px"></div>
<div class="t" style="left:1114px;top:898.1px;font-size:13px;color:#707070;letter-spacing:1.16px;">Cancel</div>
</body></html>
